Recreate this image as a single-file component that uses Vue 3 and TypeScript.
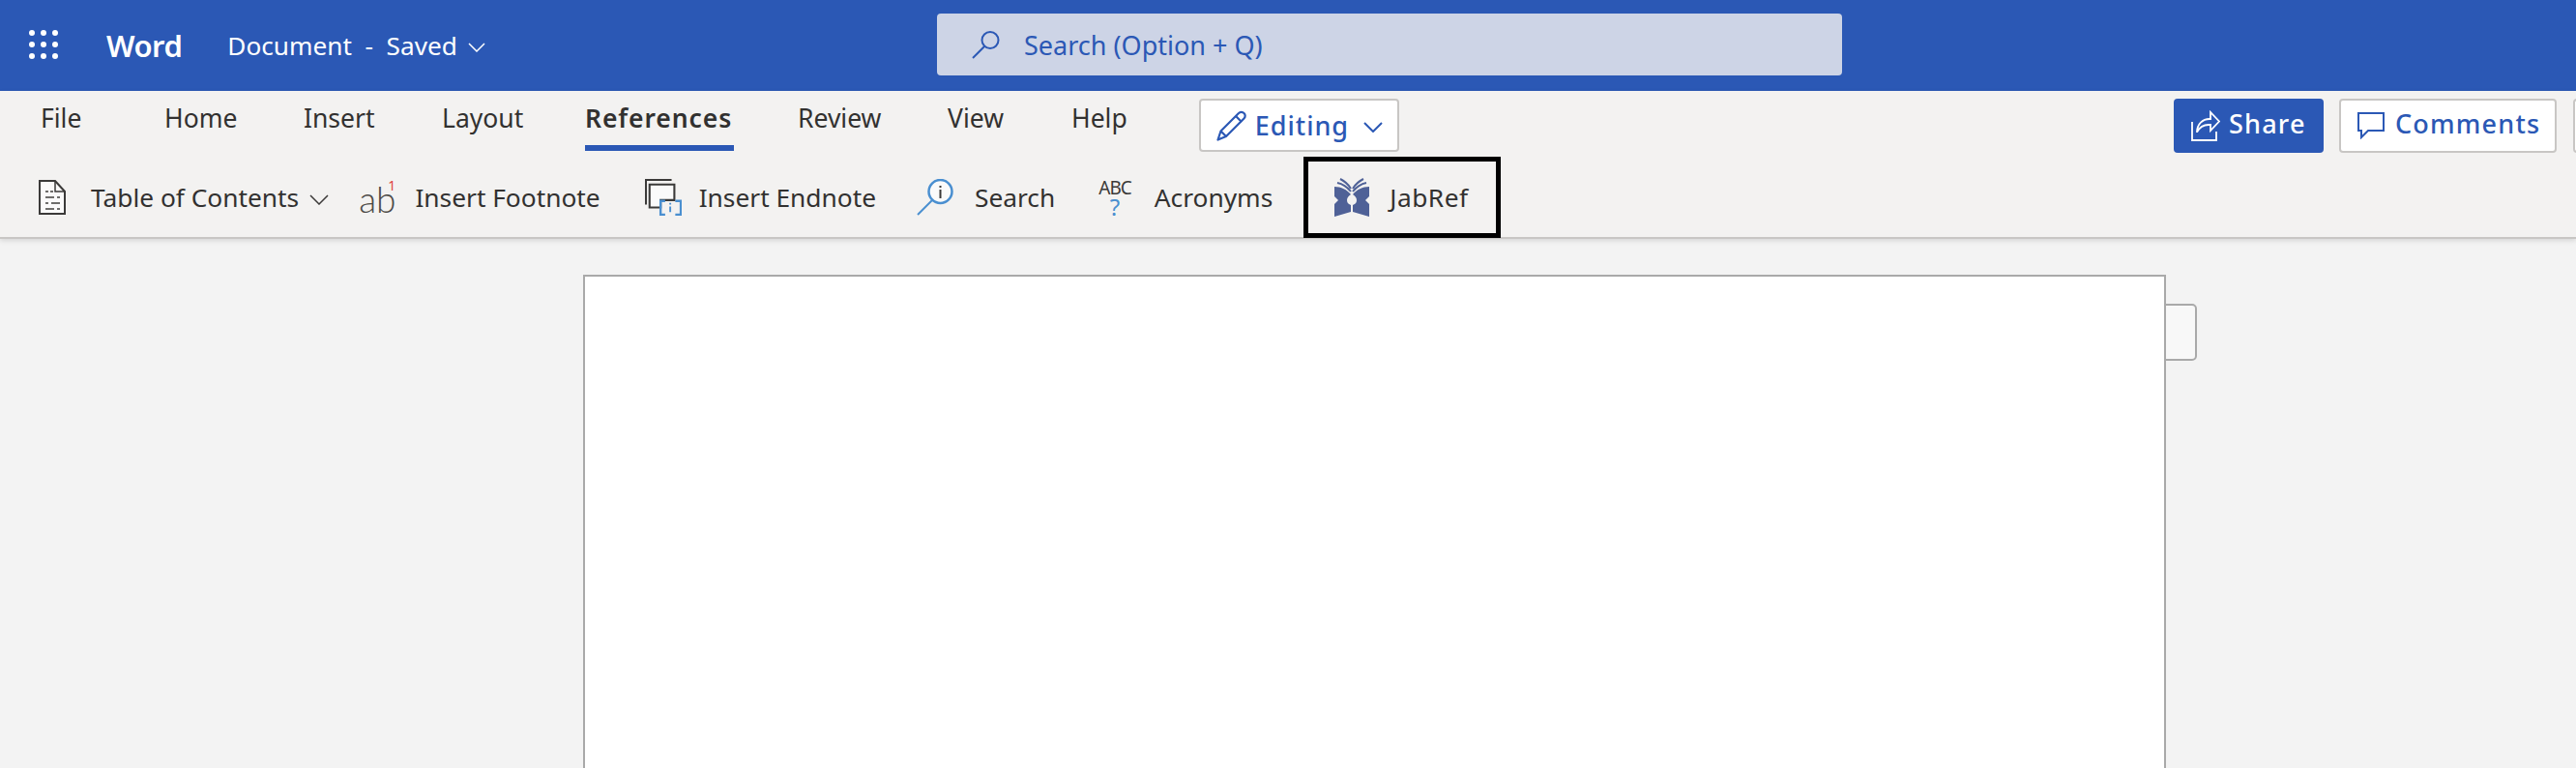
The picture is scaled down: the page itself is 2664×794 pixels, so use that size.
<script setup lang="ts">
const tabs = ['File', 'Home', 'Insert', 'Layout', 'References', 'Review', 'View', 'Help']
const dots = [0, 1, 2, 3, 4, 5, 6, 7, 8]
</script>

<template>
  <div class="app">
    <header class="topbar">
      <div class="waffle"><i v-for="d in dots" :key="d"></i></div>
      <span class="word">Word</span>
      <span class="doc">Document&nbsp; -&nbsp; Saved</span>
      <svg class="doc-chev" width="18" height="10" viewBox="0 0 18 10" fill="none" stroke="#fff" stroke-width="1.500"><path d="M1 1l8 8 8-8" /></svg>
      <div class="searchbox">
        <svg width="30" height="30" viewBox="0 0 30 30" fill="none" stroke="#2b58b5" stroke-width="2"><circle cx="19" cy="10.500" r="8.500" /><path d="M13 17L1 29" /></svg>
        <span>Search (Option + Q)</span>
      </div>
    </header>

    <section class="ribbon">
      <div class="tabrow">
        <nav class="tabs">
          <span v-for="t in tabs" :key="t" class="tab" :class="{ active: t === 'References' }"><span class="tab-text">{{ t }}</span></span>
        </nav>
        <button class="mode">
          <svg width="32" height="32" viewBox="0 0 32 32" fill="none" stroke="#2b58b5" stroke-width="2.200" stroke-linejoin="round"><path d="M1.500 30.500l3-9L23 3a3.800 3.800 0 0 1 5.500 0 3.800 3.800 0 0 1 0 5.500L10 27z" /><path d="M4.500 21.500L10 27M20 6l6 6" /></svg>
          <span>Editing</span>
          <svg class="mode-chev" width="20" height="11" viewBox="0 0 20 11" fill="none" stroke="#2b58b5" stroke-width="2"><path d="M1 1l9 9 9-9" /></svg>
        </button>
        <div class="actions">
          <button class="share">
            <svg width="30" height="32" viewBox="0 0 30 32" fill="none" stroke="#fff" stroke-width="1.800"><path d="M1 12v19h25v-9" /><path d="M6 23c0-9 6-14 13-14h1V2l9 9.500-9 9.500v-6h-2c-5 0-9 2-12 7.500z" /></svg>
            <span>Share</span>
          </button>
          <button class="comments">
            <svg width="28" height="28" viewBox="0 0 28 28" fill="none" stroke="#2b58b5" stroke-width="2"><path d="M1 1h26v18H11l-7 7v-7H1z" /></svg>
            <span>Comments</span>
          </button>
          <div class="stub"></div>
        </div>
      </div>

      <div class="toolrow">
        <div class="tool toc">
          <svg width="28" height="36" viewBox="0 0 28 36" fill="none">
            <path d="M1 1h16l10 11v23H1z" fill="#fafafa" stroke="#3b3a39" stroke-width="2" />
            <path d="M17 1v11h10" fill="none" stroke="#3b3a39" stroke-width="1.500" />
            <path d="M7 12h3M12 12h3M7 18h9M19 18h3M7 24h3M13 24h9M7 30h9M19 30h3" stroke="#6e6d6b" stroke-width="2" />
          </svg>
          <span class="label">Table of Contents</span>
          <svg class="toc-chev" width="20" height="11" viewBox="0 0 20 11" fill="none" stroke="#3b3a39" stroke-width="1.500"><path d="M1 1l9 9 9-9" /></svg>
        </div>
        <div class="tool foot">
          <span class="ab">ab</span>
          <span class="sup">1</span>
          <span class="label">Insert Footnote</span>
        </div>
        <div class="tool end">
          <svg width="38" height="38" viewBox="0 0 40 40" fill="none">
            <path d="M1 28V1h28" stroke="#3b3a39" stroke-width="2.200" />
            <path d="M5 31V6h27v17H17v8z" fill="#fafafa" stroke="#3b3a39" stroke-width="2.200" />
            <path d="M22 24h-5v15h5M33 24h6v15h-6" stroke="#4a8fd0" stroke-width="2.500" />
            <path d="M27.500 26v2M27.500 30v6" stroke="#4a8fd0" stroke-width="2" />
          </svg>
          <span class="label">Insert Endnote</span>
        </div>
        <div class="tool srch">
          <svg width="38" height="38" viewBox="0 0 38 38" fill="none">
            <circle cx="24.500" cy="13" r="12" fill="#fafafa" stroke="#4a8fd0" stroke-width="2.500" />
            <path d="M16 22L1 37" stroke="#4a8fd0" stroke-width="2" />
            <path d="M24.500 7v2M24.500 11v9" stroke="#3b3a39" stroke-width="2" />
          </svg>
          <span class="label">Search</span>
        </div>
        <div class="tool acro">
          <span class="abc"><span>ABC</span><b>?</b></span>
          <span class="label">Acronyms</span>
        </div>
        <div class="tool jab">
          <svg width="36" height="40" viewBox="0 0 36 40" fill="#4f6197">
            <path d="M0 9c7 0 13 3 17 8-3 2-4 4-4 6s1 4 4 5v7L0 40V27l4-4-4-4z" />
            <path d="M6 1c4 2 8 5 11 10M3 5c5 1 10 4 14 9" fill="none" stroke="#4f6197" stroke-width="2" />
            <path d="M36 9c-7 0-13 3-17 8 3 2 4 4 4 6s-1 4-4 5v7l17 5V27l-4-4 4-4z" />
            <path d="M30 1c-4 2-8 5-11 10M33 5c-5 1-10 4-14 9" fill="none" stroke="#4f6197" stroke-width="2" />
          </svg>
          <span class="label">JabRef</span>
        </div>
      </div>
    </section>

    <main class="canvas">
      <div class="page"></div>
      <div class="sidetab"></div>
    </main>
  </div>
</template>

<style scoped>
.app {
  width: 2664px;
  height: 794px;
  overflow: hidden;
  display: flex;
  flex-direction: column;
  font-family: "Noto Sans", "Open Sans", sans-serif;
  background: #f3f3f3;
  color: #323130;
}
.topbar {
  height: 94px;
  flex: none;
  background: #2b58b5;
  color: #fff;
  display: flex;
  align-items: center;
  padding-left: 30px;
  box-sizing: border-box;
  position: relative;
}
.waffle { display: grid; grid-template-columns: repeat(3, 6px); grid-auto-rows: 6px; gap: 6px; margin-top: -2px; width: 30px; }
.waffle i { background: #fff; border-radius: 50%; }
.word { margin-left: 50px; font-size: 31px; font-weight: 600; letter-spacing: -0.5px; }
.doc { margin-left: 47px; font-size: 26.200px; }
.doc-chev { margin-left: 11px; margin-top: 4px; }
.searchbox {
  position: absolute;
  left: 969px;
  top: 14px;
  width: 936px;
  height: 64px;
  border-radius: 4px;
  background: #cdd4e6;
  display: flex;
  align-items: center;
  padding-left: 36px;
  box-sizing: border-box;
  color: #2b58b5;
  font-size: 27px;
  gap: 24px;
}
.ribbon {
  height: 153px;
  flex: none;
  background: #f3f2f1;
  border-bottom: 2px solid #c8c6c4;
  box-shadow: 0 2px 5px rgba(0, 0, 0, 0.12);
  box-sizing: border-box;
  position: relative;
  display: flex;
  flex-direction: column;
}
.tabrow { height: 68px; flex: none; display: flex; align-items: flex-start; padding-left: 42px; box-sizing: border-box; }
.tabs { display: grid; grid-template-columns: 128px 144px 143px 148px 220px 155px 128px auto; font-size: 26.500px; }
.tab { height: 62px; line-height: 57px; white-space: nowrap; }
.tab-text { display: inline-block; height: 62px; box-sizing: border-box; }
.tab.active .tab-text { font-weight: 600; width: 154px; letter-spacing: 0.9px; border-bottom: 6px solid #2b58b5; }
.mode {
  margin: 8px 0 0 74px;
  width: 207px;
  height: 55px;
  border: 2px solid #c8c6c4;
  border-radius: 4px;
  background: #fff;
  color: #2b58b5;
  font: 500 27px "Noto Sans", sans-serif;
  letter-spacing: 1px;
  display: flex;
  align-items: center;
  padding: 0 0 0 16px;
  box-sizing: border-box;
}
.mode span { margin-left: 8px; }
.mode-chev { margin-left: 15px; margin-top: 4px; }
.actions { margin-left: auto; margin-top: 8px; display: flex; }
.share, .comments {
  height: 56px;
  border-radius: 4px;
  font: 500 27px "Noto Sans", sans-serif;
  letter-spacing: 1.200px;
  display: flex;
  align-items: center;
  box-sizing: border-box;
}
.share span, .comments span { margin-top: -5px; }
.share { width: 155px; background: #2b58b5; color: #fff; border: 0; padding-left: 18px; gap: 9px; }
.comments { width: 225px; margin-left: 16px; background: #fff; color: #2b58b5; border: 2px solid #c8c6c4; padding-left: 17px; gap: 11px; }
.stub { width: 20px; height: 56px; margin-left: 17px; margin-right: -17px; background: #fff; border: 2px solid #c8c6c4; border-radius: 4px; box-sizing: border-box; }
.toolrow { display: flex; align-items: center; height: 84px; padding-left: 40px; font-size: 26.300px; box-sizing: border-box; }
.tool { display: flex; align-items: center; white-space: nowrap; color: #323130; height: 84px; }
.toc .label { margin-left: 26px; }
.toc-chev { margin-left: 11px; margin-top: 4px; }
.foot { margin-left: 31px; position: relative; }
.ab { font: 300 37px Lato, sans-serif; color: #4c4a48; line-height: 1; margin-top: 2px; }
.sup { position: absolute; left: 30px; top: 23px; font-size: 14px; color: #e03e3e; line-height: 1; }
.foot .label { margin-left: 20px; }
.end { margin-left: 46px; }
.end .label { margin-left: 18px; }
.srch { margin-left: 42px; }
.srch .label { margin-left: 22px; }
.acro { margin-left: 45px; }
.abc { display: flex; flex-direction: column; align-items: center; font-size: 19px; line-height: 20px; color: #3b3a39; letter-spacing: -1px; }
.abc b { font-weight: 400; font-size: 24px; line-height: 20px; color: #4a8fd0; letter-spacing: 0; }
.acro .label { margin-left: 24px; }
.jab {
  box-sizing: border-box;
  border: 5px solid #000;
  margin-left: 32px;
  width: 204px;
  padding-left: 27px;
}
.jab .label { margin-left: 21px; letter-spacing: 0.5px; }
.canvas { flex: 1; position: relative; }
.page {
  position: absolute;
  left: 603px;
  top: 37px;
  width: 1637px;
  height: 700px;
  background: #fff;
  border: 2px solid #a9a9a9;
  box-sizing: border-box;
  z-index: 1;
}
.sidetab {
  position: absolute;
  left: 2230px;
  top: 67px;
  width: 42px;
  height: 59px;
  background: #f8f8f8;
  border: 2px solid #a9a9a9;
  border-radius: 5px;
  box-sizing: border-box;
}
</style>
